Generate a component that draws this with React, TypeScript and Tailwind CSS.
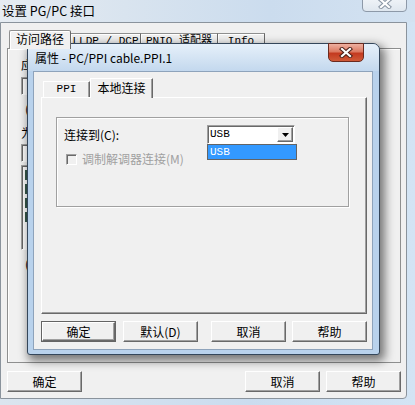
import React from "react";

const cjk = "font-['Noto_Sans_CJK_SC','Noto_Sans',sans-serif]";
const mono = "font-['Liberation_Mono','Noto_Sans_CJK_SC',monospace]";
const raised =
  "border border-t-white border-l-white border-r-[#696969] border-b-[#696969] shadow-[inset_-1px_-1px_0_#a0a0a0]";
const sunken =
  "border border-t-[#a0a0a0] border-l-[#a0a0a0] border-r-white border-b-white shadow-[inset_1px_1px_0_#696969]";

function CloseX({ fg, edge }: { fg: string; edge: string }) {
  return (
    <svg width="14" height="11" viewBox="0 0 14 11">
      <path d="M3 2 L11 9 M11 2 L3 9" stroke={edge} strokeWidth="4.2" strokeLinecap="square" fill="none" />
      <path d="M3 2 L11 9 M11 2 L3 9" stroke={fg} strokeWidth="2.2" strokeLinecap="square" fill="none" />
    </svg>
  );
}

function Button({ label, isDefault, className = "" }: { label: string; isDefault?: boolean; className?: string }) {
  if (isDefault) {
    return (
      <div className={"h-[21px] w-[75px] border border-[#646464] " + className}>
        <div className={"flex h-full w-full items-center justify-center bg-[#f0f0f0] text-[12px] leading-none text-black " + raised}>
          {label}
        </div>
      </div>
    );
  }
  return (
    <div
      className={
        "flex h-[21px] w-[75px] items-center justify-center bg-[#f0f0f0] text-[12px] leading-none text-black " +
        raised +
        " " +
        className
      }
    >
      {label}
    </div>
  );
}

function PropertiesDialog() {
  return (
    <div className="absolute left-[27px] top-[43px] flex h-[312px] w-[353px] flex-col rounded-t-[7px] rounded-b-[3px] border border-[#34465a] bg-[#b9d2ec] shadow-[3px_4px_10px_2px_rgba(0,0,0,0.5)]">
      {/* title */}
      <div className="relative flex h-[27px] items-center rounded-t-[6px] bg-[linear-gradient(180deg,#e6f0fa_0%,#d3e3f3_55%,#c3d8ee_100%)] pl-[7px]">
        <span className={cjk + " text-[12px] leading-none text-black"}>属性 - PC/PPI cable.PPI.1</span>
        <div className="absolute right-[15px] top-[-1px] flex h-[19px] w-[36px] items-center justify-center rounded-b-[5px] border border-[#6b2a1e] bg-[linear-gradient(180deg,#eeb0a0_0%,#dc7a62_45%,#c43a20_55%,#cf5a38_100%)]">
          <CloseX fg="#ffffff" edge="#4a2018" />
        </div>
      </div>

      {/* client */}
      <div className="ml-[5px] mr-[6px] mb-[4px] flex flex-1 flex-col border border-[#8ea3bb] bg-[#f0f0f0] pl-[7px] pr-[5px] pt-[6px]">
        <div className="flex h-[19px] items-end pl-[2px]">
          <div className={"flex h-[16px] w-[47px] items-center justify-center border-l border-t border-r border-white border-r-[#696969] bg-[#f0f0f0] shadow-[inset_-1px_0_0_#a0a0a0] text-[11px] leading-none text-black " + mono}>
            PPI
          </div>
          <div className={"relative z-10 -mb-px flex h-[20px] w-[63px] items-start justify-center border-l border-t border-r border-white border-r-[#696969] bg-[#f0f0f0] pt-[3px] shadow-[inset_-1px_0_0_#a0a0a0] text-[12px] leading-none text-black " + cjk}>
            本地连接
          </div>
        </div>

        <div className={"h-[217px] bg-[#f0f0f0] pl-[14px] pt-[19px] " + raised}>
          <div className="h-[90px] w-[293px] border border-[#a0a0a0] shadow-[1px_1px_0_#ffffff,inset_1px_1px_0_#ffffff]">
            <div className="mt-[7px] flex h-[19px] items-center">
              <span className={"w-[150px] pl-[7px] text-[12px] leading-none text-black " + cjk}>连接到(C):</span>
              <div className="relative h-[19px] w-[88px]">
                <div className={"flex h-full w-full items-center bg-white p-px " + sunken}>
                  <span className={"flex-1 pl-[1px] text-[11px] leading-none text-black " + mono}>USB</span>
                  <div className={"flex h-[15px] w-[16px] items-center justify-center bg-[#f0f0f0] " + raised}>
                    <svg width="7" height="4" viewBox="0 0 7 4">
                      <path d="M0 0 H7 L3.5 4 Z" fill="#000" />
                    </svg>
                  </div>
                </div>
                <div className="absolute left-0 top-full z-20 h-[16px] w-[90px] border border-[#646464] bg-[#3399ff]">
                  <span className={"block pl-[2px] pt-[2px] text-[11px] leading-none text-white " + mono}>USB</span>
                </div>
              </div>
            </div>
            <div className="mt-[9px] flex items-center pl-[9px]">
              <div className={"h-[11px] w-[11px] bg-[#f0f0f0] " + sunken}></div>
              <span className={"ml-[5px] text-[12px] leading-none text-[#a0a0a0] " + cjk}>调制解调器连接(M)</span>
            </div>
          </div>
        </div>

        <div className={"mt-[7px] flex " + cjk}>
          <Button label="确定" isDefault />
          <Button label="默认(D)" className="ml-[7px]" />
          <Button label="取消" className="ml-[13px]" />
          <Button label="帮助" className="ml-[6px]" />
        </div>
      </div>
    </div>
  );
}

export default function App() {
  return (
    <div className="relative flex h-[405px] w-[415px] flex-col overflow-hidden bg-[linear-gradient(90deg,#dbe5ef_0%,#cadcef_60%,#d3e4f4_100%)]">
      {/* outer title bar */}
      <div className="relative flex h-[22px] shrink-0 items-center bg-[linear-gradient(90deg,#e6ecf2_0%,#d9e4ef_30%,#cbdcee_65%,#d3e2f1_100%)] pl-[2px]">
        <span className={cjk + " text-[12.5px] leading-none text-black"}>设置 PG/PC 接口</span>
        <div className="absolute left-[362px] top-[-6px] flex h-[18px] w-[45px] items-center justify-center rounded-b-[4px] border border-[#8d99a8] bg-[linear-gradient(180deg,#f4f7fa_0%,#dfe7ef_100%)]">
          <CloseX fg="#ffffff" edge="#8a96a4" />
        </div>
      </div>

      {/* outer client */}
      <div className="flex h-[377px] w-[407px] flex-col rounded-br-[4px] border border-[#8a939c] bg-[#f0f0f0] pl-[6px] pr-[5px] pt-[7px]">
        <div className={"flex h-[18px] items-end pl-[2px] " + cjk}>
          <div className="relative z-10 -mb-px flex h-[19px] w-[62px] items-start justify-center rounded-t-[2px] border-l border-t border-r border-l-[#8e8f8f] border-t-[#8e8f8f] border-r-[#696969] bg-[#f0f0f0] pt-[2px] shadow-[inset_1px_1px_0_#ffffff] text-[12px] leading-none text-black">
            访问路径
          </div>
          <div className={"flex h-[15px] w-[70px] items-start justify-center border-t border-r border-t-[#8e8f8f] border-r-[#696969] pt-[2px] shadow-[inset_1px_1px_0_#ffffff] text-[11px] leading-none text-black " + mono}>
            LLDP / DCP
          </div>
          <div className={"flex h-[15px] w-[77px] items-start justify-center border-t border-r border-t-[#8e8f8f] border-r-[#696969] pt-[2px] shadow-[inset_1px_1px_0_#ffffff] text-[11px] leading-none text-black " + mono}>
            PNIO 适配器
          </div>
          <div className={"flex h-[15px] w-[47px] items-start justify-center border-t border-r border-t-[#8e8f8f] border-r-[#696969] pt-[2px] shadow-[inset_1px_1px_0_#ffffff] text-[11px] leading-none text-black " + mono}>
            Info
          </div>
        </div>

        {/* outer tab page, mostly hidden under the properties dialog */}
        <div className="flex h-[315px] flex-col border border-[#8e8f8f] bg-[#f0f0f0] pl-[13px] pt-[10px] shadow-[inset_1px_1px_0_#ffffff]">
          <span className={"text-[12px] leading-none text-black " + cjk}>应</span>
          <div className={"mt-[6px] h-[18px] w-[300px] bg-white " + sunken}></div>
          <span className={"mt-[8px] pl-[4px] text-[12px] leading-none text-black " + cjk}>(</span>
          <span className={"mt-[12px] text-[12px] leading-none text-black " + cjk}>为</span>
          <div className={"mt-[5px] h-[18px] w-[220px] bg-white " + sunken}></div>
          <div className={"mt-[3px] flex h-[85px] w-[220px] flex-col gap-[4px] bg-white pl-[3px] pt-[4px] " + sunken}>
            <span className="h-[10px] w-[14px] bg-[#35584a]"></span>
            <span className="h-[10px] w-[14px] bg-[#35584a]"></span>
            <span className="h-[10px] w-[14px] bg-[#35584a]"></span>
            <span className="h-[10px] w-[14px] bg-[#35584a]"></span>
          </div>
          <span className={"mt-[8px] pl-[4px] text-[12px] leading-none text-black " + cjk}>(</span>
        </div>

        <div className={"mt-[8px] flex " + cjk}>
          <Button label="确定" />
          <Button label="取消" className="ml-[163px]" />
          <Button label="帮助" className="ml-[6px]" />
        </div>
      </div>

      <PropertiesDialog />
    </div>
  );
}
